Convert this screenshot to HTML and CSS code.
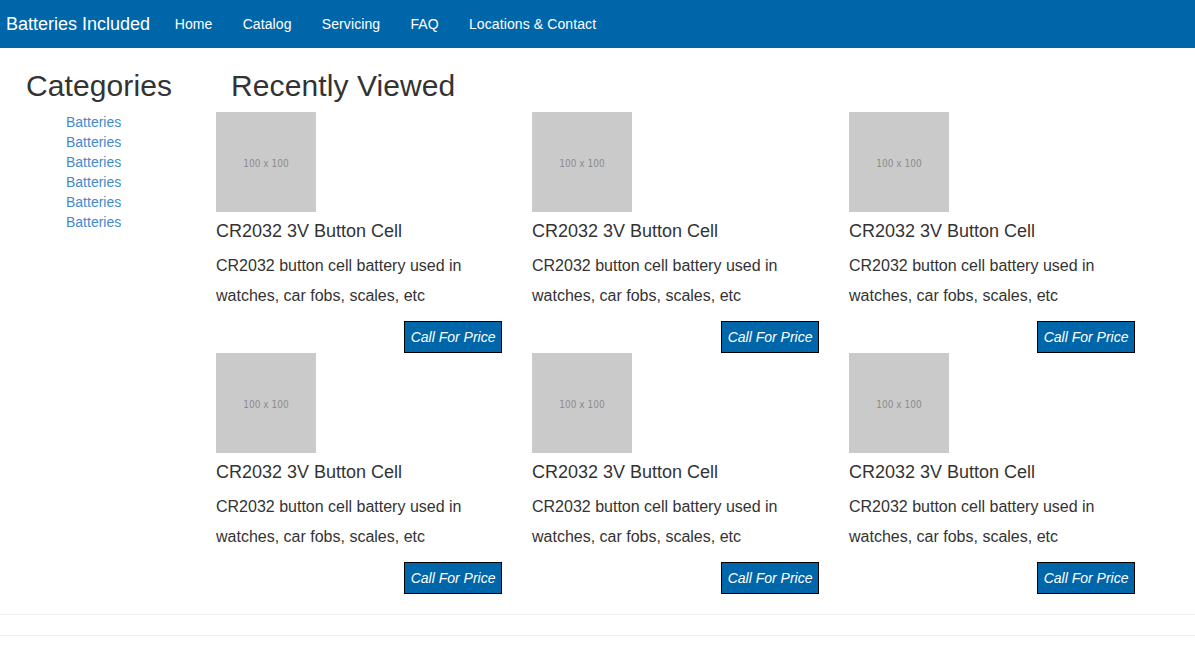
FILE: index.html
```html
<!DOCTYPE html>
<html>
<head>
<meta charset="utf-8">
<title>Batteries Included</title>
<link rel="stylesheet" href="styles.css">
</head>
<body>
<header class="navbar">
  <a class="brand" href="#">Batteries Included</a>
  <nav class="nav">
    <a href="#">Home</a>
    <a href="#">Catalog</a>
    <a href="#">Servicing</a>
    <a href="#">FAQ</a>
    <a href="#">Locations &amp; Contact</a>
  </nav>
</header>
<div class="page">
  <aside class="sidebar">
    <h2 class="heading">Categories</h2>
    <ul class="cats">
      <li><a href="#">Batteries</a></li>
      <li><a href="#">Batteries</a></li>
      <li><a href="#">Batteries</a></li>
      <li><a href="#">Batteries</a></li>
      <li><a href="#">Batteries</a></li>
      <li><a href="#">Batteries</a></li>
    </ul>
  </aside>
  <main class="main">
    <h2 class="heading main-heading">Recently Viewed</h2>
    <div class="grid">
      <div class="card"><div class="thumb">100 x 100</div><h3 class="title">CR2032 3V Button Cell</h3><p class="desc">CR2032 button cell battery used in watches, car fobs, scales, etc</p><div class="actions"><button class="price">Call For Price</button></div></div>
      <div class="card"><div class="thumb">100 x 100</div><h3 class="title">CR2032 3V Button Cell</h3><p class="desc">CR2032 button cell battery used in watches, car fobs, scales, etc</p><div class="actions"><button class="price">Call For Price</button></div></div>
      <div class="card"><div class="thumb">100 x 100</div><h3 class="title">CR2032 3V Button Cell</h3><p class="desc">CR2032 button cell battery used in watches, car fobs, scales, etc</p><div class="actions"><button class="price">Call For Price</button></div></div>
      <div class="card"><div class="thumb">100 x 100</div><h3 class="title">CR2032 3V Button Cell</h3><p class="desc">CR2032 button cell battery used in watches, car fobs, scales, etc</p><div class="actions"><button class="price">Call For Price</button></div></div>
      <div class="card"><div class="thumb">100 x 100</div><h3 class="title">CR2032 3V Button Cell</h3><p class="desc">CR2032 button cell battery used in watches, car fobs, scales, etc</p><div class="actions"><button class="price">Call For Price</button></div></div>
      <div class="card"><div class="thumb">100 x 100</div><h3 class="title">CR2032 3V Button Cell</h3><p class="desc">CR2032 button cell battery used in watches, car fobs, scales, etc</p><div class="actions"><button class="price">Call For Price</button></div></div>
    </div>
  </main>
</div>
<footer class="footer"></footer>
</body>
</html>
```
FILE: styles.css
```css
* { box-sizing: border-box; }
html, body { margin: 0; padding: 0; }
body {
  font-family: "Liberation Sans", Arial, sans-serif;
  font-size: 14px;
  line-height: 20px;
  color: #333;
  background: #fff;
}
a { text-decoration: none; }

.navbar {
  display: flex;
  align-items: center;
  height: 48px;
  background: #0066aa;
}
.brand {
  width: 159.6px;
  padding-left: 6px;
  font-size: 18px;
  color: #fff;
  line-height: 20px;
}
.nav { display: flex; }
.nav a {
  color: #fff;
  padding: 0 15.1px;
  font-size: 14px;
  line-height: 20px;
  letter-spacing: 0.1px;
}

.page { display: flex; }
.sidebar {
  width: 216px;
  padding-left: 26px;
}
.heading {
  margin: 21px 0 10px;
  font-size: 30px;
  font-weight: normal;
  line-height: 33px;
  color: #333;
  letter-spacing: 0.1px;
}
.cats {
  margin: 0;
  padding-left: 40px;
  list-style: none;
}
.cats li { line-height: 20px; }
.cats a { color: #428bca; }

.main { width: 950px; }
.main-heading { padding-left: 15px; }
.grid {
  display: grid;
  grid-template-columns: 316px 317px 316px;
}
.card {
  padding-right: 30px;
}
.thumb {
  width: 100px;
  height: 100px;
  padding-top: 4px;
  background: #cacaca;
  color: #8c8c8c;
  font-family: "DejaVu Sans Condensed", "DejaVu Sans", sans-serif;
  font-size: 10px;
  display: flex;
  align-items: center;
  justify-content: center;
}
.title {
  margin: 0 0 10px;
  padding-top: 9px;
  font-size: 18px;
  font-weight: normal;
  line-height: 20px;
}
.desc {
  margin: 0;
  font-size: 16px;
  line-height: 30px;
}
.actions {
  display: flex;
  justify-content: flex-end;
  margin-top: 10px;
}
.price {
  font-family: "Liberation Sans", Arial, sans-serif;
  font-style: italic;
  font-size: 14px;
  line-height: 20px;
  color: #fff;
  background: #0066aa;
  border: 1px solid #000;
  padding: 5px 5.5px;
  margin: 0;
  border-radius: 0;
}
.footer {
  margin-top: 20px;
  height: 22px;
  border-top: 1px solid #eee;
  border-bottom: 1px solid #eee;
}
```
